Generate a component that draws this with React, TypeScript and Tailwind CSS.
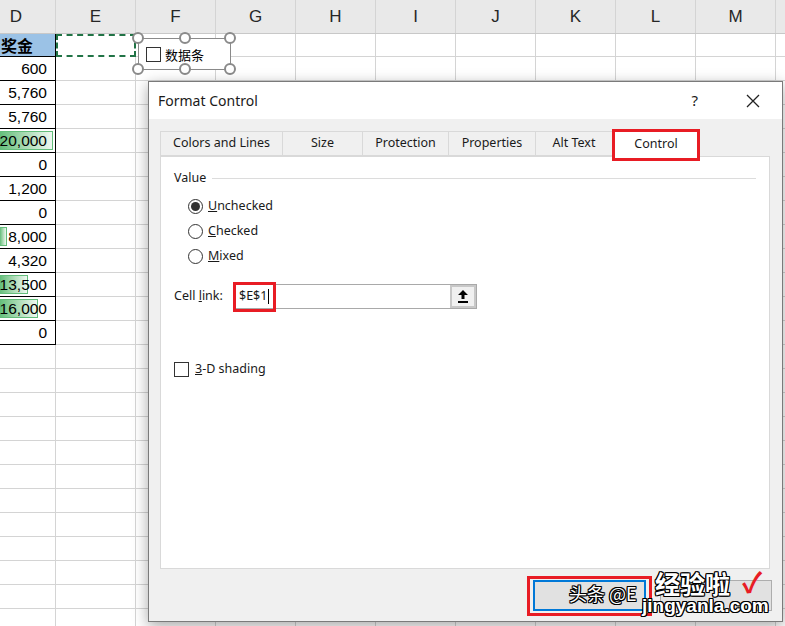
const cols = ["D", "E", "F", "G", "H", "I", "J", "K", "L", "M", ""];

type Row = { v: string; bar?: number };

const rows: Row[] = [
  { v: "600" },
  { v: "5,760" },
  { v: "5,760" },
  { v: "20,000", bar: 53 },
  { v: "0" },
  { v: "1,200" },
  { v: "0" },
  { v: "8,000", bar: 7 },
  { v: "4,320" },
  { v: "13,500", bar: 28 },
  { v: "16,000", bar: 38 },
  { v: "0" },
];

const colW = (i: number) => (i === 0 ? "w-[56px]" : "w-[80px]");

const Sheet = () => {
  const empty = Array.from({ length: 12 });
  return (
    <div className="w-[785px] h-[626px] bg-white overflow-hidden font-['Liberation_Sans',sans-serif] text-[15px] text-black">
      {/* column headers */}
      <div className="flex h-[34px] bg-[#e9e9e9] border-b border-[#c8c8c8]">
        {cols.map((c, i) => (
          <div
            key={i}
            className={`${colW(i)} shrink-0 flex items-center border-r border-[#d4d4d4] text-[17px] text-[#262626] ${i === 0 ? "justify-end pr-[33px]" : "justify-center"}`}
          >
            {c}
          </div>
        ))}
      </div>

      {/* header row */}
      <div className="flex h-[23px]">
        <div className="w-[56px] shrink-0 bg-[#9bc2e6] border-r border-b border-black flex items-center justify-end pr-[22px] font-bold text-[16px] font-['Noto_Sans_CJK_SC',sans-serif]">
          奖金
        </div>
        <div className="w-[80px] shrink-0 border-2 border-dashed border-[#217346]" />
        {cols.slice(2).map((c, i) => (
          <div key={i} className="w-[80px] shrink-0 border-r border-b border-[#d4d4d4]" />
        ))}
      </div>

      {rows.map((r, ri) => (
        <div key={ri} className="flex h-[24px]">
          <div className="relative w-[56px] shrink-0 border-r border-b border-black flex items-center justify-end pr-[8px] text-[15.5px]">
            {r.bar && (
              <div
                className="absolute left-0 top-[2px] bottom-[2px] border border-l-0 border-[#63be7b] bg-gradient-to-r from-[#63be7b] to-[#eef8f1]"
                style={{ width: r.bar }}
              />
            )}
            <span className="relative">{r.v}</span>
          </div>
          {cols.slice(1).map((c, i) => (
            <div key={i} className="w-[80px] shrink-0 border-r border-b border-[#d4d4d4]" />
          ))}
        </div>
      ))}

      {empty.map((_, ri) => (
        <div key={"e" + ri} className="flex h-[24px]">
          {cols.map((c, i) => (
            <div key={i} className={`${colW(i)} shrink-0 border-r border-b border-[#d4d4d4]`} />
          ))}
        </div>
      ))}
    </div>
  );
};

const Handle = ({ x, y }: { x: number; y: number }) => (
  <circle cx={x} cy={y} r="5" fill="white" stroke="#8a8a8a" strokeWidth="2" />
);

const FormCheckbox = () => (
  <div className="absolute left-[132px] top-[32px] w-[104px] h-[44px]">
    <svg width="104" height="44" className="absolute inset-0">
      <rect x="6.5" y="6.5" width="92" height="31" fill="white" stroke="#8a8a8a" />
      <Handle x={6} y={6} />
      <Handle x={53} y={6} />
      <Handle x={98} y={6} />
      <Handle x={6} y={37} />
      <Handle x={53} y={37} />
      <Handle x={98} y={37} />
    </svg>
    <div className="absolute left-[14px] top-[13px] flex items-center gap-[4px]">
      <div className="w-[15px] h-[15px] border border-[#333] bg-white" />
      <span className="text-[13px] font-['Noto_Sans_CJK_SC',sans-serif]">数据条</span>
    </div>
  </div>
);

const Radio = ({ label, on }: { label: string; on?: boolean }) => (
  <div className="flex items-center gap-[5px] h-[25px]">
    <div className="w-[15px] h-[15px] rounded-full border border-[#333] bg-white flex items-center justify-center">
      {on && <div className="w-[9px] h-[9px] rounded-full bg-[#333]" />}
    </div>
    <span>
      <span className="underline">{label[0]}</span>
      {label.slice(1)}
    </span>
  </div>
);

const tabs = [
  { t: "Colors and Lines", w: "w-[122px]" },
  { t: "Size", w: "w-[80px]" },
  { t: "Protection", w: "w-[86px]" },
  { t: "Properties", w: "w-[87px]" },
  { t: "Alt Text", w: "w-[77px]" },
];

const outline =
  "[text-shadow:1px_1px_0_#000,-1px_-1px_0_#000,1px_-1px_0_#000,-1px_1px_0_#000,0_1px_0_#000,0_-1px_0_#000,1px_0_0_#000,-1px_0_0_#000]";

const Dialog = () => (
  <div className="absolute left-[148px] top-[81px] w-[635px] h-[541px] border border-[#7a7a7a] bg-[#f0f0f0] shadow-[0_4px_14px_rgba(0,0,0,0.35)] font-['Noto_Sans',sans-serif] text-[12.5px] text-[#1a1a1a] flex flex-col">
    <div className="h-[37px] bg-white flex items-center pl-[9px] shrink-0">
      <span className="text-[14px]">Format Control</span>
      <span className="ml-auto mr-[48px] text-[15px]">?</span>
      <svg width="14" height="14" viewBox="0 0 14 14" className="mr-[22px]">
        <path d="M1 1 L13 13 M13 1 L1 13" stroke="#222" strokeWidth="1.3" />
      </svg>
    </div>

    <div className="flex flex-col pl-[11px] pr-[12px] pt-[11px]">
      <div className="flex h-[26px] items-end">
        {tabs.map((tab) => (
          <div
            key={tab.t}
            className={`${tab.w} h-[25px] border border-r-0 border-[#d9d9d9] flex items-center justify-center`}
          >
            {tab.t}
          </div>
        ))}
        <div className="relative w-[88px] h-[27px] bg-white border border-b-0 border-[#d9d9d9] flex items-center justify-center -mb-px z-10">
          Control
          <div className="absolute -left-[1px] -top-[2px] -right-[1px] -bottom-[4px] border-[3px] border-[#e81c24]" />
        </div>
      </div>

      <div className="h-[413px] bg-white border border-[#d9d9d9] px-[13px] pt-[12px] flex flex-col">
        <div className="flex items-center gap-[6px]">
          <span>Value</span>
          <div className="flex-1 h-px bg-[#dcdcdc]" />
        </div>
        <div className="pl-[14px] pt-[6px] flex flex-col">
          <Radio label="Unchecked" on />
          <Radio label="Checked" />
          <Radio label="Mixed" />
        </div>

        <div className="flex items-center mt-[15px]">
          <span className="w-[59px]">
            Cell <span className="underline">l</span>ink:
          </span>
          <div className="w-[244px] h-[25px] border border-[#a9a9a9] flex items-stretch">
            <div className="relative flex-1 flex items-center pl-[5px]">
              <span>$E$1</span>
              <span className="w-px h-[15px] bg-black ml-[1px]" />
              <div className="absolute -left-[1px] -top-[3px] w-[43px] h-[30px] border-[3px] border-[#e81c24]" />
            </div>
            <div className="w-[26px] bg-[#c8c8c8] flex items-center justify-center">
              <div className="w-[22px] h-[19px] bg-[#f0f0f0] flex items-center justify-center">
                <svg width="10" height="13" viewBox="0 0 10 13">
                  <path d="M5 0 L10 5 L6.5 5 L6.5 9 L3.5 9 L3.5 5 L0 5 Z" fill="#000" />
                  <rect x="0" y="11" width="10" height="2" fill="#000" />
                </svg>
              </div>
            </div>
          </div>
        </div>

        <div className="flex items-center gap-[6px] mt-[51px]">
          <div className="w-[15px] h-[15px] border border-[#333] bg-white" />
          <span>
            <span className="underline">3</span>-D shading
          </span>
        </div>
      </div>

      <div className="relative flex justify-end gap-[14px] mt-[11px]">
        <div className="relative w-[113px] h-[31px] bg-[#e1e1e1] border-2 border-[#0078d7]">
          <div className="absolute -left-[8px] -top-[6px] -right-[8px] -bottom-[7px] border-[3px] border-[#e81c24]" />
        </div>
        <div className="w-[112px] h-[31px] bg-[#e1e1e1] border border-[#adadad] mr-[-2px]" />

        {/* watermark */}
        <div className="absolute right-[0px] -top-[10px] w-[210px] h-[48px] font-['Noto_Sans_CJK_SC',sans-serif] pointer-events-none">
          <span className={`absolute left-[9px] top-[10px] text-[18px] text-white ${outline}`}>
            头条 @E
          </span>
          <span className={`absolute left-[95px] -top-[5px] text-[25px] font-bold text-white ${outline}`}>
            经验啦
          </span>
          <span className="absolute left-[182px] -top-[10px] text-[28px] font-bold text-[#e81c24]">✓</span>
          <span
            className={`absolute left-[82px] top-[22px] text-[19px] font-bold text-white font-['Liberation_Sans',sans-serif] ${outline}`}
          >
            jingyanla.com
          </span>
        </div>
      </div>
    </div>
  </div>
);

export default function App() {
  return (
    <div className="relative w-[785px] h-[626px] overflow-hidden">
      <Sheet />
      <FormCheckbox />
      <Dialog />
    </div>
  );
}
